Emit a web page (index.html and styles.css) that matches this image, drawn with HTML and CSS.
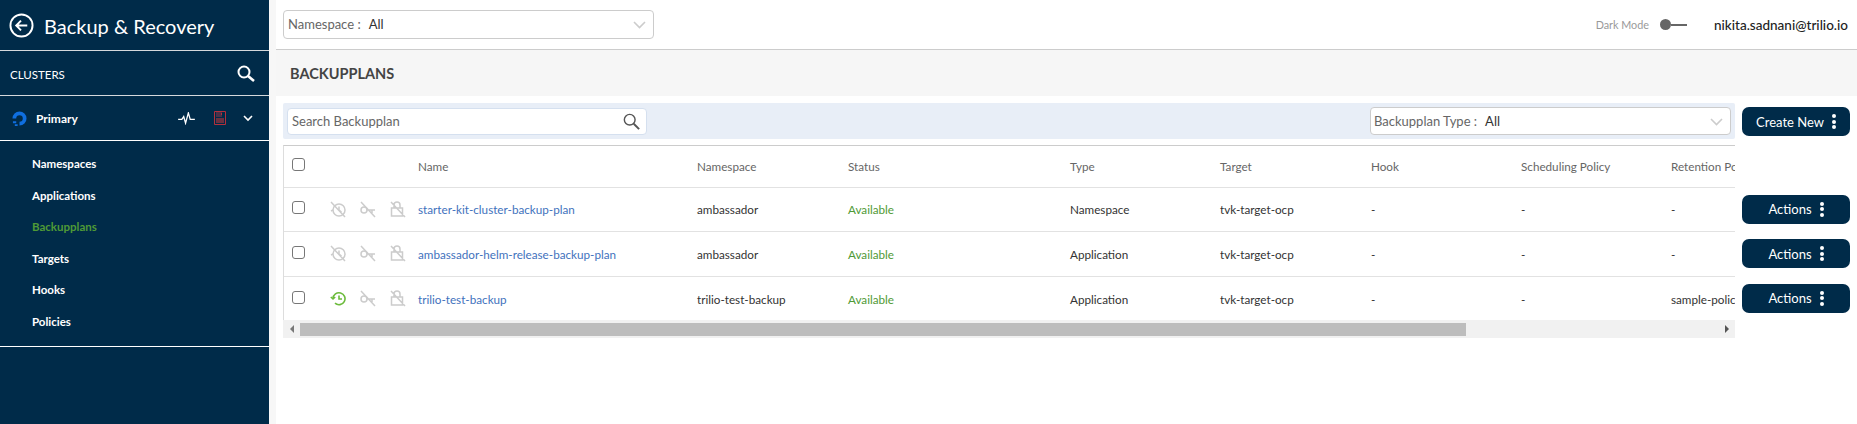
FILE: index.html
```html
<!DOCTYPE html>
<html>
  <head>
    <title>Backup &amp; Recovery</title>
    <link rel="stylesheet" href="styles.css">
  </head>
  <body>
    <div class="sidebar">
      <div class="side-head">
        <svg class="back-icon" width="25" height="25" viewBox="0 0 26 26" fill="none" stroke="#fff" stroke-width="2">
          <circle cx="13" cy="13" r="11.5"/>
          <path d="M19 13H7.5M12.5 8l-5 5 5 5"/>
        </svg>
        <span class="side-title">Backup &amp; Recovery</span>
      </div>
      <div class="side-clusters">
        <span class="clusters-label">CLUSTERS</span>
        <svg width="18" height="17" viewBox="0 0 18 17" fill="none" stroke="#fff" stroke-width="2">
          <circle cx="7" cy="7" r="5.5"/>
          <path d="M11 11l6 5" stroke-width="2.6"/>
        </svg>
      </div>
      <div class="side-cluster">
        <svg class="cluster-logo" width="15" height="15" viewBox="0 0 16 16" fill="none" stroke="#0f6fe0">
          <path d="M8 13.5A5.5 5.5 0 1 0 2.5 8" stroke-width="4"/>
          <path d="M1 12h3.5M3 15h3" stroke-width="2"/>
        </svg>
        <span class="cluster-name">Primary</span>
        <svg class="pulse-icon" width="17" height="13" viewBox="0 0 18 14" fill="none" stroke="#fff" stroke-width="1.4">
          <path d="M0 8h4l2-3 2 7 3-11 2 7h5"/>
        </svg>
        <svg class="save-icon" width="12" height="14" viewBox="0 0 12 14">
          <path d="M.5.5h11v13H.5z" fill="none" stroke="#b3303c"/>
          <path d="M2 7h8v5H2z" fill="#6b3040"/>
          <path d="M2 1h6v5H2z" fill="#4a3048"/>
          <path d="M7 2h1v2H7z" fill="#b3303c"/>
        </svg>
        <svg class="chev-icon" width="10" height="7" viewBox="0 0 10 7" fill="none" stroke="#fff" stroke-width="1.6">
          <path d="M1 1l4 4 4-4"/>
        </svg>
      </div>
      <div class="side-nav">
        <a>Namespaces</a>
        <a>Applications</a>
        <a class="active">Backupplans</a>
        <a>Targets</a>
        <a>Hooks</a>
        <a>Policies</a>
      </div>
    </div>

    <div class="main">
      <div class="topbar">
        <div class="select ns-select">
          <span class="select-label">Namespace :</span>
          <span class="select-value">All</span>
          <svg class="select-chev" width="13" height="8" viewBox="0 0 13 8" fill="none" stroke="#ccc" stroke-width="1.6">
            <path d="M1 1l5.5 5.5L12 1"/>
          </svg>
        </div>
        <div class="top-right">
          <span class="dark-label">Dark Mode</span>
          <span class="toggle"><span class="toggle-knob"></span><span class="toggle-line"></span></span>
          <span class="user">nikita.sadnani@trilio.io</span>
        </div>
      </div>

      <div class="page-title">BACKUPPLANS</div>

      <div class="content">
        <div class="left-col">
          <div class="toolbar">
            <div class="search">
              <span class="search-text">Search Backupplan</span>
              <svg width="17" height="17" viewBox="0 0 19 19" fill="none" stroke="#555" stroke-width="1.6">
                <circle cx="7.5" cy="7.5" r="6"/>
                <path d="M12 12l6 6" stroke-width="2.2"/>
              </svg>
            </div>
            <div class="select type-select">
              <span class="select-label">Backupplan Type :</span>
              <span class="select-value">All</span>
              <svg class="select-chev" width="13" height="8" viewBox="0 0 13 8" fill="none" stroke="#ccc" stroke-width="1.6">
                <path d="M1 1l5.5 5.5L12 1"/>
              </svg>
            </div>
          </div>

          <div class="table-wrap">
            <table class="plans">
              <colgroup>
                <col class="c-check"><col class="c-name"><col class="c-ns"><col class="c-status">
                <col class="c-type"><col class="c-target"><col class="c-hook"><col class="c-sched"><col class="c-ret">
              </colgroup>
              <thead>
                <tr>
                  <th><span class="check"></span></th>
                  <th>Name</th><th>Namespace</th><th>Status</th><th>Type</th>
                  <th>Target</th><th>Hook</th><th>Scheduling Policy</th><th>Retention Policy</th>
                </tr>
              </thead>
              <tbody>
                <tr>
                  <td>
                    <div class="row-tools">
                      <span class="check"></span>
                      <svg class="tool" width="16" height="17" viewBox="0 0 16 17" fill="none" stroke="#ccc" stroke-width="1.5"><circle cx="9" cy="9" r="6"/><path d="M9 5.5V9l2.5 2M3 9l-2 1M1 1l14 15"/></svg>
                      <svg class="tool" width="16" height="17" viewBox="0 0 16 17" fill="none" stroke="#ccc" stroke-width="1.5"><circle cx="4" cy="9" r="3"/><path d="M7 9h8M12 9v3M1 1l14 15"/></svg>
                      <svg class="tool" width="16" height="17" viewBox="0 0 16 17" fill="none" stroke="#ccc" stroke-width="1.5"><path d="M1.5 7h11v8h-11zM4 7V4a3 3 0 0 1 6 0v3M1 1l14 15"/></svg>
                    </div>
                  </td>
                  <td><a class="plan-link">starter-kit-cluster-backup-plan</a></td>
                  <td>ambassador</td><td class="ok">Available</td><td>Namespace</td>
                  <td>tvk-target-ocp</td><td>-</td><td>-</td><td>-</td>
                </tr>
                <tr>
                  <td>
                    <div class="row-tools">
                      <span class="check"></span>
                      <svg class="tool" width="16" height="17" viewBox="0 0 16 17" fill="none" stroke="#ccc" stroke-width="1.5"><circle cx="9" cy="9" r="6"/><path d="M9 5.5V9l2.5 2M3 9l-2 1M1 1l14 15"/></svg>
                      <svg class="tool" width="16" height="17" viewBox="0 0 16 17" fill="none" stroke="#ccc" stroke-width="1.5"><circle cx="4" cy="9" r="3"/><path d="M7 9h8M12 9v3M1 1l14 15"/></svg>
                      <svg class="tool" width="16" height="17" viewBox="0 0 16 17" fill="none" stroke="#ccc" stroke-width="1.5"><path d="M1.5 7h11v8h-11zM4 7V4a3 3 0 0 1 6 0v3M1 1l14 15"/></svg>
                    </div>
                  </td>
                  <td><a class="plan-link">ambassador-helm-release-backup-plan</a></td>
                  <td>ambassador</td><td class="ok">Available</td><td>Application</td>
                  <td>tvk-target-ocp</td><td>-</td><td>-</td><td>-</td>
                </tr>
                <tr>
                  <td>
                    <div class="row-tools">
                      <span class="check"></span>
                      <svg class="tool" width="16" height="17" viewBox="0 0 16 17" fill="none" stroke="#6cbb3c" stroke-width="1.6"><path d="M3 8.5a6 6 0 1 1 2 4.7"/><path d="M9 5.5V9H12M.8 7l2.2 2 2.2-2"/></svg>
                      <svg class="tool" width="16" height="17" viewBox="0 0 16 17" fill="none" stroke="#ccc" stroke-width="1.5"><circle cx="4" cy="9" r="3"/><path d="M7 9h8M12 9v3M1 1l14 15"/></svg>
                      <svg class="tool" width="16" height="17" viewBox="0 0 16 17" fill="none" stroke="#ccc" stroke-width="1.5"><path d="M1.5 7h11v8h-11zM4 7V4a3 3 0 0 1 6 0v3M1 1l14 15"/></svg>
                    </div>
                  </td>
                  <td><a class="plan-link">trilio-test-backup</a></td>
                  <td>trilio-test-backup</td><td class="ok">Available</td><td>Application</td>
                  <td>tvk-target-ocp</td><td>-</td><td>-</td><td>sample-policy</td>
                </tr>
              </tbody>
            </table>
          </div>

          <div class="hscroll">
            <span class="arrow-left"></span>
            <div class="hscroll-track"><div class="hscroll-thumb"></div></div>
            <span class="arrow-right"></span>
          </div>
        </div>

        <div class="right-col">
          <button class="btn btn-create">Create New <span class="dots"><i></i><i></i><i></i></span></button>
          <div class="action-rows">
            <div class="action-row"><button class="btn">Actions <span class="dots"><i></i><i></i><i></i></span></button></div>
            <div class="action-row"><button class="btn">Actions <span class="dots"><i></i><i></i><i></i></span></button></div>
            <div class="action-row"><button class="btn">Actions <span class="dots"><i></i><i></i><i></i></span></button></div>
          </div>
        </div>
      </div>
    </div>
  </body>
</html>
```

FILE: styles.css
```css
* {
  box-sizing: border-box;
}
html,
body {
  height: 100%;
}
body {
  margin: 0;
  display: flex;
  height: 424px;
  overflow: hidden;
  background-color: #fff;
  font-family: Lato, "Open Sans", sans-serif;
  font-size: 12px;
  color: #333;
}

/* sidebar */
.sidebar {
  width: 269px;
  flex-shrink: 0;
  background-color: #002b49;
  color: #fff;
}
.side-head {
  height: 51px;
  display: flex;
  align-items: center;
  padding-left: 9px;
  gap: 10px;
  border-bottom: 1px solid #d5d9dc;
}
.side-title {
  font-size: 20px;
  line-height: 26px;
  padding-top: 2px;
}
.side-clusters {
  height: 45px;
  display: flex;
  align-items: center;
  justify-content: space-between;
  padding: 0 14px 0 10px;
  font-size: 11.5px;
  border-bottom: 1px solid #d5d9dc;
}
.clusters-label {
  padding-top: 2px;
}
.side-cluster {
  height: 45px;
  display: flex;
  align-items: center;
  padding-left: 12px;
  border-bottom: 1px solid #fff;
}
.cluster-name {
  margin-left: 9px;
  font-weight: 700;
  width: 142px;
}
.save-icon {
  margin-left: 19px;
}
.chev-icon {
  margin-left: 17px;
}
.side-nav {
  display: flex;
  flex-direction: column;
  padding: 7px 0 7px 32px;
  border-bottom: 1px solid #fff;
  height: 206px;
  font-size: 11.5px;
}
.side-nav a {
  height: 31.5px;
  line-height: 31px;
  font-weight: 700;
  color: #fff;
}
.side-nav a.active {
  color: #4f9a36;
}

/* main */
.main {
  flex: 1;
  min-width: 0;
  margin-left: 7px;
  box-shadow: -7px 0 0 #f7f7f7;
}
.topbar {
  height: 50px;
  display: flex;
  align-items: center;
  justify-content: space-between;
  padding: 0 9px 0 7px;
  border-bottom: 1px solid #ccc;
}
.select {
  display: flex;
  align-items: center;
  position: relative;
  height: 29px;
  background-color: #fff;
  border: 1px solid #ccc;
  border-radius: 4px;
  padding-left: 4px;
}
.ns-select {
  width: 371px;
  margin-top: -1px;
}
.select-label {
  font-size: 13px;
  color: #666;
}
.select-value {
  margin-left: 8px;
  font-size: 13px;
  color: #333;
}
.select-chev {
  position: absolute;
  right: 7px;
  top: 10px;
}
.top-right {
  display: flex;
  align-items: center;
}
.dark-label {
  font-size: 10.8px;
  color: #999;
}
.toggle {
  display: flex;
  align-items: center;
  margin-left: 11px;
  width: 27px;
}
.toggle-knob {
  width: 11px;
  height: 11px;
  border-radius: 50%;
  background-color: #666;
}
.toggle-line {
  flex: 1;
  height: 2px;
  background-color: #666;
}
.user {
  margin-left: 27px;
  font-size: 13.5px;
  font-weight: 500;
  color: #222;
}
.page-title {
  height: 46px;
  line-height: 47px;
  padding-left: 14px;
  background-color: #f6f6f6;
  font-size: 14.5px;
  font-weight: 700;
  color: #444;
}
.content {
  display: flex;
  gap: 7px;
  padding: 7px 7px 0 7px;
}
.left-col {
  width: 1452px;
  flex-shrink: 0;
}
.toolbar {
  height: 36px;
  display: flex;
  align-items: center;
  justify-content: space-between;
  padding: 0 4px;
  background-color: #e8eef7;
  border-radius: 2px;
}
.search {
  width: 360px;
  height: 27px;
  display: flex;
  align-items: center;
  justify-content: space-between;
  padding: 0 6px 0 4px;
  background-color: #fff;
  border: 1px solid #d5e0ef;
  border-radius: 4px;
}
.search-text {
  font-size: 13px;
  color: #666;
}
.type-select {
  width: 361px;
  height: 28px;
  padding-left: 3px;
}

/* table */
.table-wrap {
  margin-top: 6px;
  height: 175px;
  overflow: hidden;
  border-top: 1px solid #ccc;
  border-left: 1px solid #ddd;
}
.plans {
  table-layout: fixed;
  border-collapse: collapse;
  width: 1537px;
  font-size: 11.7px;
}
.c-check {
  width: 134px;
}
.c-name {
  width: 279px;
}
.c-ns {
  width: 151px;
}
.c-status {
  width: 222px;
}
.c-type {
  width: 150px;
}
.c-target {
  width: 151px;
}
.c-hook {
  width: 150px;
}
.c-sched {
  width: 150px;
}
.c-ret {
  width: 150px;
}
.plans th {
  height: 41px;
  padding: 0 0 1px;
  text-align: left;
  font-weight: 400;
  color: #666;
  white-space: nowrap;
}
.plans td {
  height: 44.5px;
  padding: 0;
  border-top: 1px solid #e2e2e2;
  white-space: nowrap;
  color: #333;
}
.plans th:first-child,
.plans td:first-child {
  padding-left: 8px;
}
.check {
  display: block;
  width: 13px;
  height: 13px;
  background-color: #fff;
  border: 1px solid #777;
  border-radius: 3px;
}
.plans th .check {
  margin-bottom: 3px;
}
.row-tools .check {
  margin-bottom: 3px;
}
.row-tools {
  display: flex;
  align-items: center;
}
.tool {
  margin-left: 14px;
}
.tool:first-of-type {
  margin-left: 25px;
}
.plan-link {
  color: #3f72bd;
}
.plans td.ok {
  color: #4f9a36;
}
.hscroll {
  height: 18px;
  display: flex;
  align-items: center;
  background-color: #f1f1f1;
}
.hscroll-track {
  flex: 1;
  height: 13px;
}
.hscroll-thumb {
  width: 1166px;
  height: 13px;
  background-color: #bdbdbd;
}
.arrow-left,
.arrow-right {
  width: 17px;
  flex-shrink: 0;
  display: flex;
  justify-content: center;
}
.arrow-left::before {
  content: "";
  border: 4px solid transparent;
  border-left: 0;
  border-right: 4px solid #777;
}
.arrow-right::before {
  content: "";
  border: 4px solid transparent;
  border-right: 0;
  border-left: 4px solid #555;
}

/* buttons */
.right-col {
  width: 108px;
  padding-top: 4px;
}
.btn {
  width: 108px;
  height: 29px;
  display: flex;
  align-items: center;
  justify-content: center;
  gap: 8px;
  padding: 0;
  background-color: #002b49;
  color: #fff;
  border: none;
  border-radius: 7px;
  font-family: inherit;
  font-size: 13px;
  cursor: pointer;
}
.dots {
  display: flex;
  flex-direction: column;
  gap: 1.5px;
}
.dots i {
  display: block;
  width: 4px;
  height: 4px;
  border-radius: 50%;
  background-color: #fff;
}
.action-rows {
  margin-top: 51px;
  display: flex;
  flex-direction: column;
}
.action-row {
  height: 44.5px;
  display: flex;
  align-items: center;
}
```
